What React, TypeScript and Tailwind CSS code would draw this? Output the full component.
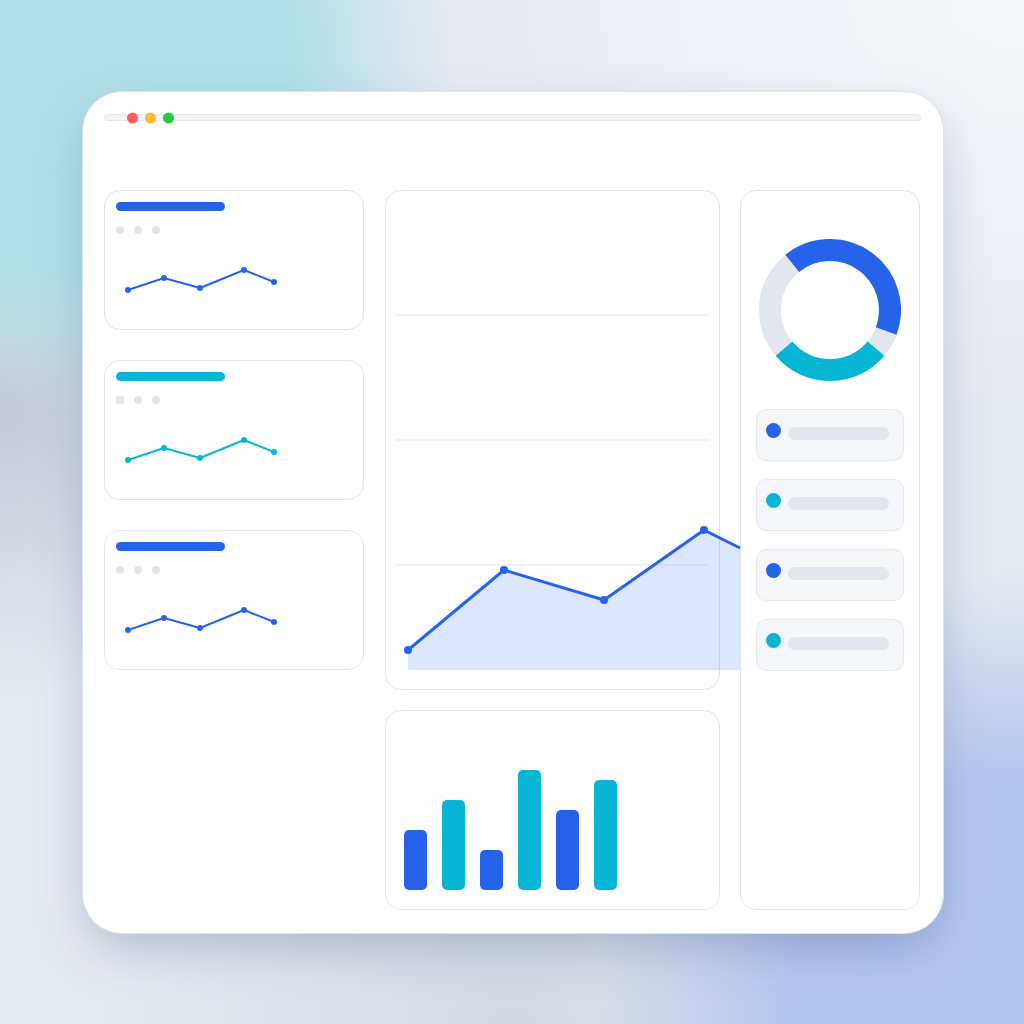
const BLUE = "#2563eb";
const CYAN = "#06b6d4";

const spark = [
  [12, 30],
  [48, 18],
  [84, 28],
  [128, 10],
  [158, 22],
];

function StatCard({ color }: { color: string }) {
  const pts = spark.map((p) => p.join(",")).join(" ");
  return (
    <div className="h-[140px] rounded-[16px] border border-[#e3e6ee] bg-white px-[11px] pt-[11px]">
      <div className="h-[9px] w-[109px] rounded-full" style={{ backgroundColor: color }} />
      <div className="mt-[15px] flex gap-[10px]">
        <span className="h-[8px] w-[8px] rounded-full bg-[#e0e5ec]" />
        <span className="h-[8px] w-[8px] rounded-full bg-[#e0e5ec]" />
        <span className="h-[8px] w-[8px] rounded-full bg-[#e0e5ec]" />
      </div>
      <svg width="170" height="40" className="mt-[26px] block overflow-visible">
        <polyline points={pts} fill="none" stroke={color} strokeWidth="2" strokeLinejoin="round" />
        {spark.map(([x, y], i) => (
          <circle key={i} cx={x} cy={y} r="3" fill={color} />
        ))}
      </svg>
    </div>
  );
}

const area = [
  [22, 459],
  [118, 379],
  [218, 409],
  [318, 339],
  [354, 357],
];

function AreaCard() {
  const line = area.map((p) => p.join(",")).join(" ");
  const fill = `22,479 ${line} 354,479`;
  return (
    <div className="relative h-[500px] rounded-[16px] border border-[#e3e6ee] bg-white">
      <svg width="335" height="500" className="absolute left-0 top-0 overflow-visible">
        {[124, 249, 374].map((y) => (
          <line key={y} x1="10" x2="323" y1={y} y2={y} stroke="#e6e9ef" strokeWidth="1" />
        ))}
        <polygon points={fill} fill="rgba(37,99,235,0.16)" />
        <polyline points={line} fill="none" stroke={BLUE} strokeWidth="3" strokeLinejoin="round" />
        {area.slice(0, 4).map(([x, y], i) => (
          <circle key={i} cx={x} cy={y} r="4" fill={BLUE} />
        ))}
      </svg>
    </div>
  );
}

const bars = [
  { h: 60, c: BLUE },
  { h: 90, c: CYAN },
  { h: 40, c: BLUE },
  { h: 120, c: CYAN },
  { h: 80, c: BLUE },
  { h: 110, c: CYAN },
];

function BarCard() {
  return (
    <div className="flex h-[200px] items-end gap-[15px] rounded-[16px] border border-[#e3e6ee] bg-white pb-[19px] pl-[18px]">
      {bars.map((b, i) => (
        <div key={i} className="w-[23px] rounded-[5px]" style={{ height: b.h, backgroundColor: b.c }} />
      ))}
    </div>
  );
}

function Donut() {
  return (
    <svg width="142" height="142" viewBox="0 0 142 142">
      <circle cx="71" cy="71" r="60" fill="none" stroke="#e2e6ee" strokeWidth="22" />
      <path d="M33.24 24.37 A60 60 0 0 1 127.2 92.0" fill="none" stroke={BLUE} strokeWidth="22" />
      <path d="M116.96 109.57 A60 60 0 0 1 25.04 109.57" fill="none" stroke={CYAN} strokeWidth="22" />
    </svg>
  );
}

function Legend({ color }: { color: string }) {
  return (
    <div className="flex h-[52px] items-start gap-[7px] rounded-[10px] border border-[#e5e8ef] bg-[#f5f6fa] pl-[9px] pt-[13px]">
      <span className="h-[15px] w-[15px] rounded-full" style={{ backgroundColor: color }} />
      <span className="mt-[4px] h-[13px] w-[101px] rounded-full bg-[#e2e6ee]" />
    </div>
  );
}

export default function App() {
  return (
    <div className="h-[1024px] w-[1024px] bg-[#e6eaf1] bg-[radial-gradient(ellipse_38%_34%_at_6%_6%,#b1dfe9_0%,#b1dfe9_60%,transparent_100%),radial-gradient(ellipse_42%_44%_at_100%_100%,#b2c5f0_0%,#b3c6ef_55%,transparent_100%),radial-gradient(ellipse_30%_28%_at_0%_40%,#c3cad7_0%,transparent_100%),radial-gradient(ellipse_40%_25%_at_50%_100%,#d3d9e3_0%,transparent_100%),radial-gradient(ellipse_60%_40%_at_100%_0%,#f5f7fa_0%,transparent_100%)] pl-[82px] pt-[91px]">
      <div className="h-[843px] w-[862px] rounded-[40px] border border-[#dfe3ea] bg-white px-[21px] pt-[22px] shadow-[0_20px_50px_-8px_rgba(70,90,140,0.35)]">
        <div className="relative h-[7px] w-[817px] rounded-full border border-[#e5e7ee] bg-[#f3f4f7]">
          <div className="absolute left-[22px] top-1/2 flex -translate-y-1/2 gap-[7px]">
            <span className="h-[11px] w-[11px] rounded-full bg-[#ff5f57]" />
            <span className="h-[11px] w-[11px] rounded-full bg-[#febc2e]" />
            <span className="h-[11px] w-[11px] rounded-full bg-[#28c840]" />
          </div>
        </div>
        <div className="mt-[69px] flex gap-[20px]">
          <div className="flex w-[261px] flex-col gap-[30px] pr-px">
            <StatCard color={BLUE} />
            <StatCard color={CYAN} />
            <StatCard color={BLUE} />
          </div>
          <div className="flex w-[335px] flex-col gap-[20px]">
            <AreaCard />
            <BarCard />
          </div>
          <div className="flex h-[720px] w-[180px] flex-col items-center rounded-[16px] border border-[#e3e6ee] bg-white pt-[48px]">
            <Donut />
            <div className="mt-[28px] flex w-full flex-col gap-[18px] px-[15px]">
              <Legend color={BLUE} />
              <Legend color={CYAN} />
              <Legend color={BLUE} />
              <Legend color={CYAN} />
            </div>
          </div>
        </div>
      </div>
    </div>
  );
}
